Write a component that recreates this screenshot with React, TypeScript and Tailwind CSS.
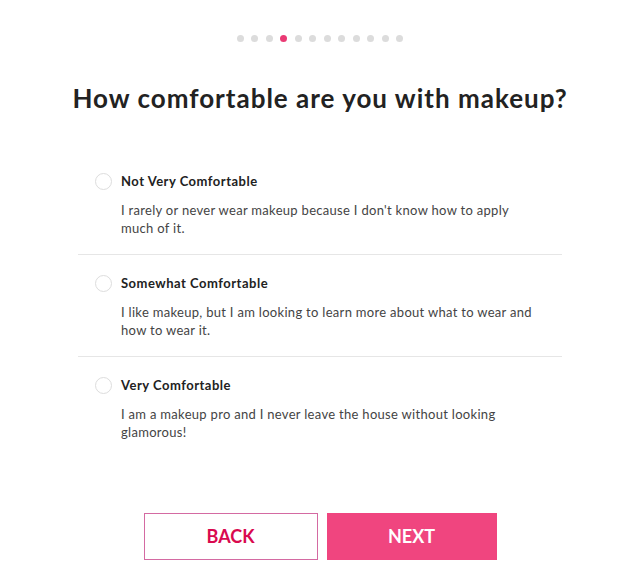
import { useState } from "react";

const options = [
  {
    title: "Not Very Comfortable",
    text: "I rarely or never wear makeup because I don't know how to apply much of it.",
  },
  {
    title: "Somewhat Comfortable",
    text: "I like makeup, but I am looking to learn more about what to wear and how to wear it.",
  },
  {
    title: "Very Comfortable",
    text: "I am a makeup pro and I never leave the house without looking glamorous!",
  },
];

export default function App() {
  const [selected, setSelected] = useState<number | null>(null);
  const step = 3;

  return (
    <div className="min-h-[580px] w-full bg-white font-['Lato',sans-serif] text-[#222]">
      {/* progress dots */}
      <div className="flex justify-center gap-[7.5px] pt-[35px]">
        {Array.from({ length: 12 }).map((_, i) => (
          <span
            key={i}
            className={`h-[7px] w-[7px] rounded-full ${
              i === step ? "bg-[#ea3a74]" : "bg-[#dcdcdc]"
            }`}
          />
        ))}
      </div>

      <h1 className="mt-[40px] text-center text-[26px] font-bold leading-[32px] tracking-[1px] text-[#222]">
        How comfortable are you with makeup?
      </h1>

      <div className="mx-auto mt-[39px] w-[484px]">
        {options.map((o, i) => (
          <label
            key={o.title}
            onClick={() => setSelected(i)}
            className={`flex cursor-pointer gap-[9px] pl-[17px] pr-[17px] pt-[18px] pb-[17px] ${
              i < options.length - 1 ? "border-b border-[#e6e6e6]" : ""
            }`}
          >
            <span className="mt-[1.5px] flex h-[17px] w-[17px] shrink-0 items-center justify-center rounded-full border border-[#dddddd]">
              {selected === i && (
                <span className="h-[9px] w-[9px] rounded-full bg-[#ea3a74]" />
              )}
            </span>
            <span className="flex max-w-[414px] flex-col">
              <span className="text-[13px] font-bold leading-[20px] tracking-[0.5px] text-[#222]">
                {o.title}
              </span>
              <span className="mt-[10px] text-[13px] leading-[18px] tracking-[0.3px] text-[#444]">
                {o.text}
              </span>
            </span>
          </label>
        ))}
      </div>

      <div className="mt-[55px] flex justify-center gap-[9px]">
        <button className="h-[47px] w-[174px] border border-[#d46aa2] bg-white text-[18px] font-bold text-[#d9094f]">
          BACK
        </button>
        <button className="h-[47px] w-[170px] bg-[#f0457f] text-[18px] font-bold text-white">
          NEXT
        </button>
      </div>
    </div>
  );
}
